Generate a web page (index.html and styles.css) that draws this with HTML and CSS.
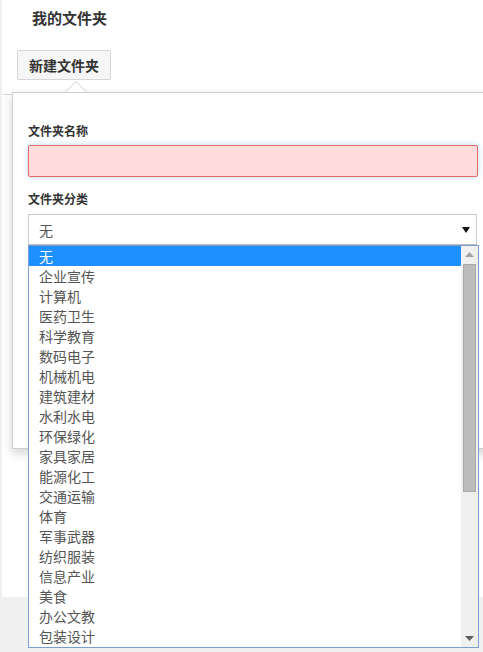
FILE: index.html
```html
<!DOCTYPE html>
<html lang="zh-CN">
<head>
<meta charset="utf-8">
<title>我的文件夹</title>
<link rel="stylesheet" href="styles.css">
</head>
<body>
<div class="page">
  <div class="title">我的文件夹</div>
  <button class="btn" type="button">新建文件夹</button>
  <div class="panel"></div>

  <div class="popover">
    <div class="arrow"></div>
    <div class="form">
      <label class="label first">文件夹名称</label>
      <div class="input error"></div>
      <label class="label">文件夹分类</label>
      <div class="select">
        <span class="select-value">无</span>
        <svg class="select-caret" width="8" height="6" viewBox="0 0 8 6"><path d="M0 0H8L4 6Z" fill="#111"/></svg>
      </div>
    </div>
    <div class="listbox">
      <ul class="options">
        <li class="option selected">无</li>
        <li class="option">企业宣传</li>
        <li class="option">计算机</li>
        <li class="option">医药卫生</li>
        <li class="option">科学教育</li>
        <li class="option">数码电子</li>
        <li class="option">机械机电</li>
        <li class="option">建筑建材</li>
        <li class="option">水利水电</li>
        <li class="option">环保绿化</li>
        <li class="option">家具家居</li>
        <li class="option">能源化工</li>
        <li class="option">交通运输</li>
        <li class="option">体育</li>
        <li class="option">军事武器</li>
        <li class="option">纺织服装</li>
        <li class="option">信息产业</li>
        <li class="option">美食</li>
        <li class="option">办公文教</li>
        <li class="option">包装设计</li>
      </ul>
      <div class="scrollbar">
        <div class="sb-btn">
          <svg width="9" height="5" viewBox="0 0 9 5"><path d="M0 5H9L4.5 0Z" fill="#a3a3a3"/></svg>
        </div>
        <div class="sb-track"><div class="sb-thumb"></div></div>
        <div class="sb-btn">
          <svg width="9" height="5" viewBox="0 0 9 5"><path d="M0 0H9L4.5 5Z" fill="#606060"/></svg>
        </div>
      </div>
    </div>
  </div>
</div>
</body>
</html>
```

FILE: styles.css
```css
html, body {
  margin: 0;
  padding: 0;
}
body {
  background: #f0f0f0;
  width: 483px;
  height: 652px;
  overflow: hidden;
  font-family: "Microsoft YaHei", "Noto Sans CJK SC", "Noto Sans", sans-serif;
  color: #333;
}
.page {
  position: relative;
  margin-left: 2px;
  height: 597px;
  background: #fff;
  display: flex;
  flex-direction: column;
  align-items: flex-start;
}
.title {
  margin: 8px 0 0 30px;
  font-size: 15px;
  line-height: 20px;
  font-weight: bold;
  color: #333;
}
.btn {
  margin: 22px 0 0 15px;
  height: 30px;
  padding: 0 11px;
  font-family: inherit;
  font-size: 14px;
  font-weight: bold;
  color: #333;
  background: #f6f6f6;
  border: 1px solid #d6d6d6;
  border-radius: 2px;
}
.panel {
  margin-top: 14px;
  align-self: stretch;
  border-top: 1px solid #dcdcdc;
}
.popover {
  position: absolute;
  left: 10px;
  top: 92px;
  width: 490px;
  height: 355px;
  background: #fff;
  border: 1px solid #cfcfcf;
  box-shadow: 0 4px 10px rgba(0, 0, 0, 0.18);
}
.arrow {
  position: absolute;
  top: -12px;
  left: 52px;
  width: 0;
  height: 0;
  border-left: 11px solid transparent;
  border-right: 11px solid transparent;
  border-bottom: 11px solid #cfcfcf;
}
.arrow::after {
  content: "";
  position: absolute;
  left: -10px;
  top: 1px;
  border-left: 10px solid transparent;
  border-right: 10px solid transparent;
  border-bottom: 10px solid #fff;
}
.form {
  padding: 0 15px;
  display: flex;
  flex-direction: column;
  align-items: flex-start;
}
.label {
  display: block;
  font-size: 12px;
  line-height: 17px;
  font-weight: bold;
  color: #333;
  margin-top: 13px;
}
.label.first {
  margin-top: 29px;
}
.input {
  margin-top: 6px;
  width: 450px;
  height: 32px;
  box-sizing: border-box;
  border: 1px solid #e56868;
  background: #ffdddd;
  border-radius: 2px;
  box-shadow: 0 0 6px rgba(102, 175, 233, 0.45);
}
.select {
  margin-top: 7px;
  width: 449px;
  height: 31px;
  box-sizing: border-box;
  border: 1px solid #cccccc;
  border-bottom-color: #bbb;
  background: #fff;
  display: flex;
  align-items: center;
  justify-content: space-between;
  padding: 0 6px 0 10px;
  font-size: 14px;
  color: #555;
}
.select-caret {
  display: block;
}
.listbox {
  position: absolute;
  left: 15px;
  top: 152px;
  width: 451px;
  height: 403px;
  box-sizing: border-box;
  border: 1px solid #7b9dd6;
  background: #fff;
  display: flex;
}
.options {
  list-style: none;
  margin: 0;
  padding: 0;
  flex: 1;
}
.option {
  height: 20px;
  line-height: 20px;
  padding-left: 10px;
  font-size: 14px;
  color: #555;
}
.option.selected {
  background: #1e90ff;
  color: #fff;
}
.scrollbar {
  width: 17px;
  background: #f0f0f0;
  display: flex;
  flex-direction: column;
}
.sb-btn {
  height: 17px;
  display: flex;
  align-items: center;
  justify-content: center;
}
.sb-track {
  flex: 1;
  padding: 0 2px;
}
.sb-thumb {
  height: 228px;
  margin-top: 1px;
  box-sizing: border-box;
  background: #bcbcbc;
  border: 1px solid #a9a9a9;
}
```
